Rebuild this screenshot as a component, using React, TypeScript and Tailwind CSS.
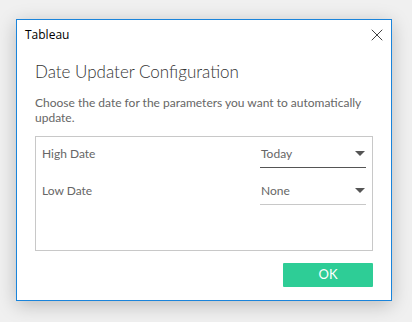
import { X } from "lucide-react";

type Row = { label: string; value: string; active?: boolean };

const rows: Row[] = [
  { label: "High Date", value: "Today", active: true },
  { label: "Low Date", value: "None" },
];

function Caret() {
  return (
    <svg width="10" height="5" viewBox="0 0 10 5" className="shrink-0">
      <path d="M0 0 L10 0 L5 5 Z" fill="#555555" />
    </svg>
  );
}

export default function App() {
  return (
    <main className="h-[322px] w-[412px] bg-[#f0f0f0] pl-[16px] pt-[19px] font-['Lato',sans-serif]">
      <div className="flex h-[282px] w-[376px] flex-col border border-[#1a84db] bg-white shadow-[0_4px_18px_rgba(0,0,0,0.22)]">
        {/* title bar */}
        <div className="flex h-[29px] items-center justify-between pl-[8px] pr-[4px]">
          <span className="font-['Segoe_UI','Open_Sans',sans-serif] text-[12px] text-black">Tableau</span>
          <X size={20} strokeWidth={0.9} className="text-black" />
        </div>

        <div className="flex flex-1 flex-col px-[18px]">
          <h1 className="mt-[13px] text-[17px] font-light leading-[20px] text-[#333333]">
            Date Updater Configuration
          </h1>
          <p className="mt-[13px] text-[12px] leading-[15px] text-[#666666]">
            Choose the date for the parameters you want to automatically update.
          </p>

          {/* parameter box */}
          <div className="mt-[11px] flex h-[115px] flex-col gap-[9px] border border-[#c8c8c8] px-[6px] pt-[3px]">
            {rows.map((r) => (
              <div key={r.label} className="flex h-[28px] items-center justify-between">
                <span className="text-[12px] text-[#666666]">{r.label}</span>
                <div
                  className={
                    r.active
                      ? "flex h-[28px] w-[106px] items-center justify-between border-b border-[#555555] pl-[1px] pr-[1px]"
                      : "flex h-[28px] w-[106px] items-center justify-between border-b border-[#c8c8c8] pl-[1px] pr-[1px]"
                  }
                >
                  <span className="text-[12px] text-[#666666]">{r.value}</span>
                  <Caret />
                </div>
              </div>
            ))}
          </div>

          <div className="mt-[12px] flex justify-end">
            <button className="h-[24px] w-[90px] rounded-[1px] bg-[#2ecd96] text-[13px] text-white">
              OK
            </button>
          </div>
        </div>
      </div>
    </main>
  );
}
